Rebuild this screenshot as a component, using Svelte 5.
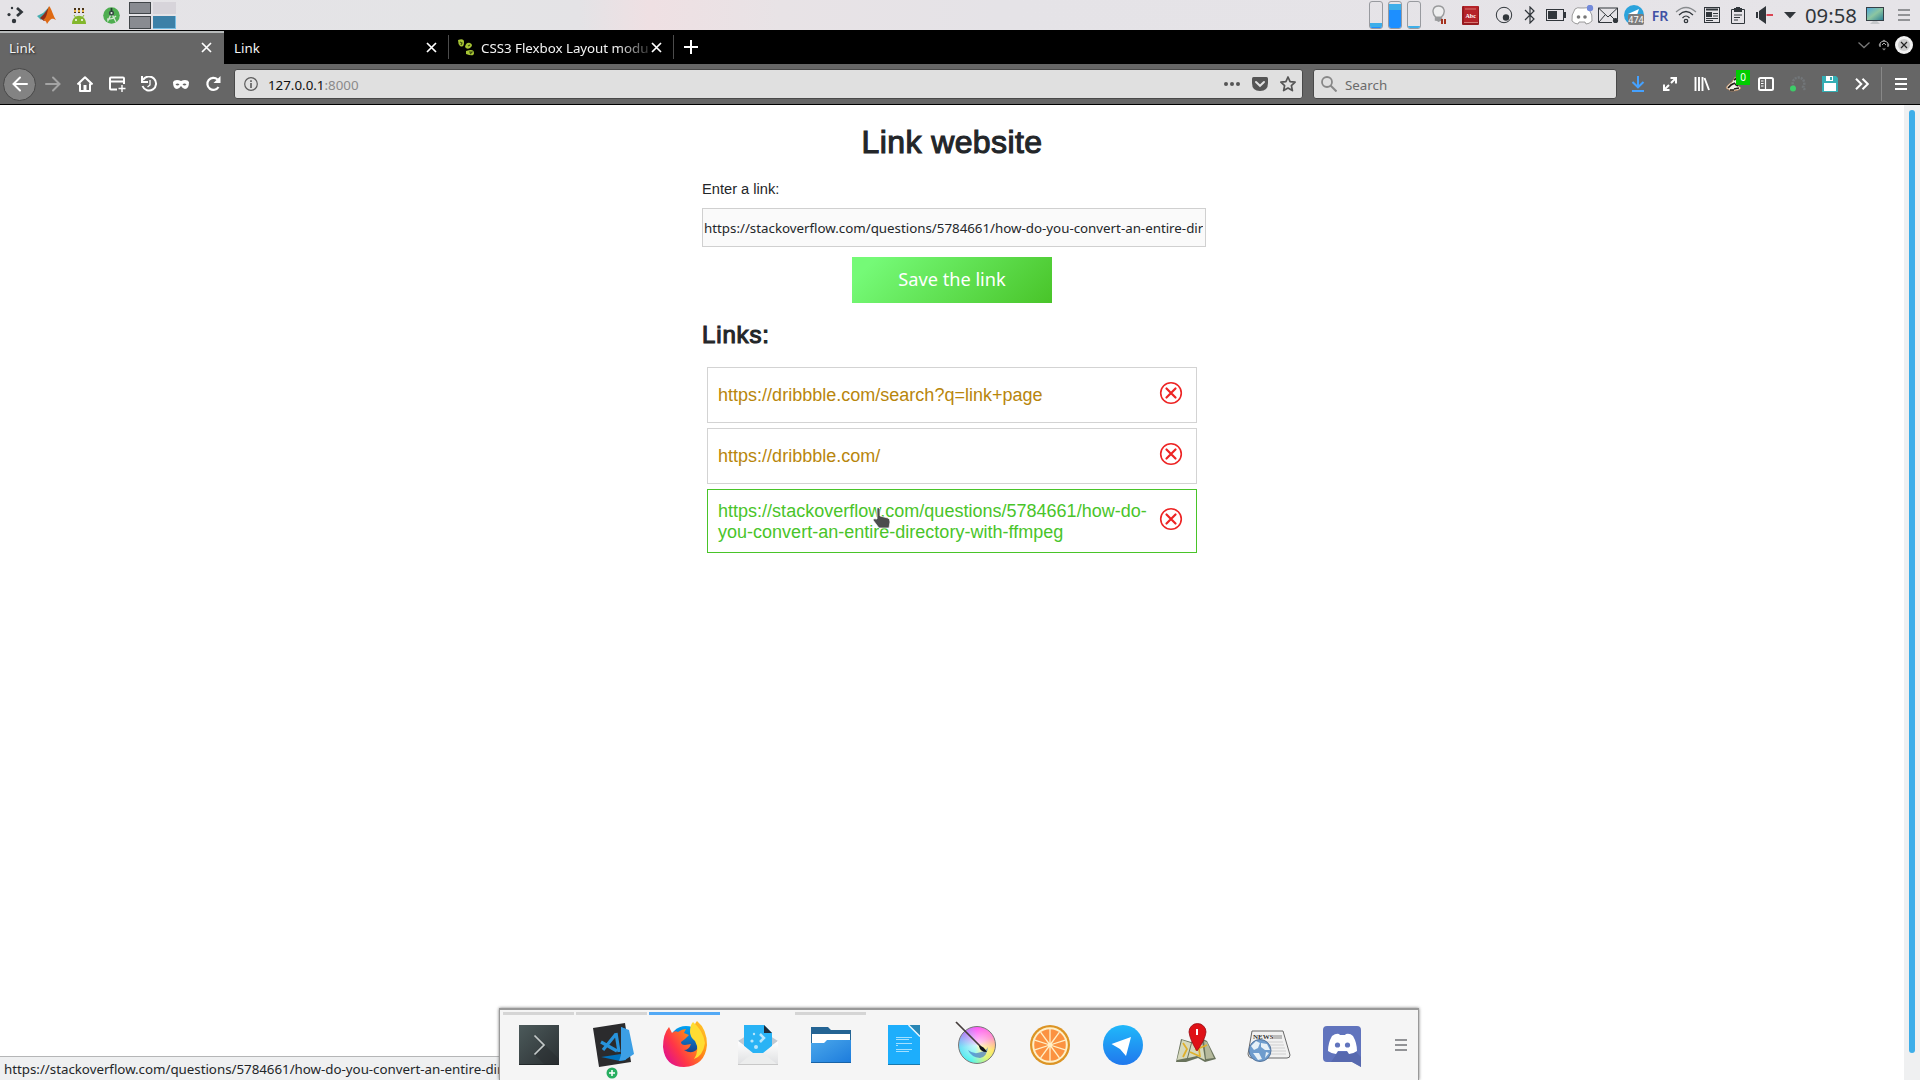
<script>
  const savedLinks = [
    { url: 'https://dribbble.com/search?q=link+page', hovered: false },
    { url: 'https://dribbble.com/', hovered: false },
    {
      url: 'https://stackoverflow.com/questions/5784661/how-do-you-convert-an-entire-directory-with-ffmpeg',
      hovered: true
    }
  ];
  const longUrl = savedLinks[2].url;
  const meters = [
    { top: 4, bottom: 1 },
    { top: 6, bottom: 18 },
    { top: 2, bottom: 0 }
  ];
  const petals = [0, 36, 72, 108, 144, 180, 216, 252, 288, 324];
</script>

{#snippet cross()}
  <svg class="cross" width="11" height="11" viewBox="0 0 11 11"><path d="M1 1l9 9M10 1l-9 9" fill="none" stroke="#fff" stroke-width="1.7" /></svg>
{/snippet}

<div class="desktop">
  <header class="panel">
    <div class="launchers">
      <span class="slot32 first"><svg width="18" height="18" viewBox="0 0 18 18"><g fill="#31363b"><circle cx="5" cy="2" r="1.2" /><circle cx="2" cy="8.6" r="1.6" /><circle cx="7" cy="15" r="2.2" /></g><path d="M10 2l4.500 4-4.500 4" fill="none" stroke="#31363b" stroke-width="2.7" /></svg></span>
      <span class="slot32"><svg width="20" height="18" viewBox="0 0 20 18"><path d="M0 10l6-3 6-6-3 8-5 5z" fill="#45aeb0" /><path d="M3 12l4-4 5-7-2 12-3 2z" fill="#8f2c16" /><path d="M12 0c3 3 4 10 7 14-4-2-5-2-9 4-1-3-2-4-4-4 4-2 4-8 6-14z" fill="#df6912" /></svg></span>
      <span class="slot32"><svg width="16" height="17" viewBox="0 0 16 17"><path d="M4 1v5M8 1v5M12 1v5" stroke="#4b3516" stroke-width="2" /><path d="M4 3v2M8 3v2M12 3v2" stroke="#eab545" stroke-width="2" /><path d="M1 17c0-11 14-11 14 0z" fill="#83b72c" /><path d="M3 8l2 3M13 8l-2 3" stroke="#83b72c" /><circle cx="5" cy="13" r="1" fill="#fff" /><circle cx="11" cy="13" r="1" fill="#fff" /></svg></span>
      <span class="slot32"><svg width="17" height="17" viewBox="0 0 17 17"><circle cx="8.500" cy="8.500" r="8.300" fill="#4eae50" /><path d="M4.500 14.500l4-8 4.500 8.500M4 12q5 1 9-3" fill="none" stroke="#d5e6d3" stroke-width="1.300" /><circle cx="8.500" cy="6" r="2.600" fill="#394c45" /><path d="M8.500 1v4" stroke="#293b36" stroke-width="1.700" /><circle cx="8.500" cy="6" r="1" fill="#e5eee5" /></svg></span>
    </div>
    <div class="pager"><i class="busy"></i><i></i><i class="busy"></i><i class="current"></i></div>
    <div class="tray">
      <div class="meters">
        {#each meters as m}
          <div class="meter"><b style:height="{m.top}px"></b><em style:height="{m.bottom}px"></em></div>
        {/each}
      </div>
      <span class="bulb"><svg width="16" height="20" viewBox="0 0 16 20"><path d="M3.500 12C-1 7 1 1 6.500 1s8 6 3 11v3h-6z" fill="#eeeeef" stroke="#999a9c" stroke-width="1.400" /><path d="M3.500 11.500h6v4L6.500 17l-3-2z" fill="#999a9c" /><path d="M9 14h2v5H9zM12 14h2v5h-2z" fill="#a5321e" /></svg></span>
      <span class="book"><svg width="17" height="19" viewBox="0 0 17 19"><rect width="17" height="19" rx="1" fill="#971b20" /><path d="M2 0h14v17H2z" fill="#b52329" /><path d="M3 3h11M2 16.500h14" stroke="#d67773" /><text x="3.500" y="12" class="abc">Abc</text></svg></span>
      <span class="slot26"><svg width="18" height="18" viewBox="0 0 18 18"><circle cx="9" cy="9" r="7.700" fill="none" stroke="#31363b" /><circle cx="11" cy="11.500" r="3.200" fill="#31363b" /></svg></span>
      <span class="slot26"><svg width="12" height="18" viewBox="0 0 12 18"><path d="M1 4l9 9-4 4V1l4 4-9 9" fill="none" stroke="#31363b" stroke-width="1.200" /></svg></span>
      <span class="slot26"><svg width="20" height="12" viewBox="0 0 20 12"><rect x=".5" y=".5" width="17" height="11" fill="none" stroke="#31363b" /><path d="M2 2h9v8H2zM18 3h2v6h-2z" fill="#31363b" /></svg></span>
      <span class="slot26"><svg width="23" height="20" viewBox="0 0 23 20"><path d="M4 4q3-2 5-1l4 0q3-1 5 1 4 6 3 12-3 3-6 3l-1-2H8l-1 2q-3 0-6-3Q0 10 4 4z" fill="#fff" stroke="#777" stroke-width=".7" /><circle cx="7.500" cy="12" r="1.800" fill="#777" /><circle cx="14" cy="12" r="1.800" fill="#777" /><circle cx="19" cy="3" r="3.200" fill="#7289da" /></svg></span>
      <span class="slot26"><svg width="21" height="17" viewBox="0 0 21 17"><path d="M.5 1h19v11M14 15.500H.5V1l9.500 9 9.500-9M1 15l6-7M12 8l4 4" fill="none" stroke="#31363b" /><circle cx="17.500" cy="13.500" r="2.600" fill="#31363b" /></svg></span>
      <span class="slot26"><svg width="20" height="20" viewBox="0 0 20 20"><circle cx="10" cy="10" r="10" fill="#2ba3dc" /><path d="M4 9l11-5-2 6z" fill="#fff" /><rect x="4" y="9" width="16" height="11" rx="2" fill="#7c7c7c" /><text x="4.300" y="17.500" class="count">474</text></svg></span>
      <span class="slot26 lang">FR</span>
      <span class="slot26"><svg width="22" height="18" viewBox="0 0 22 18"><g fill="none"><path d="M1 6q10-9 20 0" stroke="#888b8e" stroke-width="1.200" /><path d="M4 9q7-7 14 0M7.500 12q3.500-4 7 0" stroke="#31363b" stroke-width="1.200" /><circle cx="11" cy="15" r="1.700" stroke="#31363b" stroke-width="1.300" /></g></svg></span>
      <span class="slot26"><svg width="16" height="16" viewBox="0 0 16 16"><rect x=".5" y=".5" width="15" height="15" fill="none" stroke="#31363b" /><path d="M2 2.500h12" stroke="#31363b" stroke-width="2" /><path d="M9 6.500h5M9 9h5M2 11.500h12M2 13.500h7" stroke="#31363b" stroke-width="1.200" /><path d="M2 5h6v5H2z" fill="#31363b" /></svg></span>
      <span class="slot26"><svg width="14" height="17" viewBox="0 0 14 17"><path d="M.5 2.500h13v14H.5z" fill="none" stroke="#31363b" /><path d="M3 1h2V0h4v1h2v4H3z" fill="#31363b" /><path d="M3 8h8M3 10.500h6M3 13h4" stroke="#31363b" /></svg></span>
      <span class="slot26"><svg width="17" height="18" viewBox="0 0 17 18"><path d="M0 6h2v6H0zM3 5l7-5v18l-7-5z" fill="#31363b" /><path d="M10.500 9H17" stroke="#da4453" stroke-width="2" /></svg></span>
      <span class="slot26"><svg width="12" height="7" viewBox="0 0 12 7"><path d="M0 0h12L6 6.500z" fill="#31363b" /></svg></span>
      <span class="clock">09:58</span>
      <span class="monitor"><svg width="18" height="18" viewBox="0 0 18 18"><defs><linearGradient id="screen" x2="1" y2="1"><stop stop-color="#4fa8d8" /><stop offset=".5" stop-color="#8cc6a1" /><stop offset="1" stop-color="#2f8296" /></linearGradient></defs><rect y="1" width="18" height="14" fill="#353f46" /><rect x="1" y="2" width="16" height="12" fill="url(#screen)" /><path d="M7 15h4l3 3H4z" fill="#c5c7ca" /></svg></span>
      <span class="bars grey"><i></i><i></i><i></i></span>
    </div>
  </header>

  <nav class="tabs">
    <div class="tab active"><span>Link</span>{@render cross()}</div>
    <div class="tab"><span>Link</span>{@render cross()}</div>
    <div class="tab">
      <svg class="favicon" width="17" height="17" viewBox="0 0 17 17"><g fill="#a6c434"><path d="M0 1q6-2 6 2 0 6-4 4Q0 5 0 1z" /><path d="M7 8q1-5 5-4 4 2 0 5-3 2-5-1z" /><path d="M8 12q8-3 8 2 0 4-8 1z" /></g><path d="M2 3l2 1-1 2M10 7l2-1M11 13l3 0-2 2" fill="none" stroke="#3c4d10" stroke-width="1.200" /></svg>
      <span class="faded">CSS3 Flexbox Layout modu</span>{@render cross()}
    </div>
    <svg class="newtab" width="14" height="14" viewBox="0 0 14 14"><path d="M7 0v14M0 7h14" stroke="#fff" stroke-width="2" /></svg>
    <div class="winbtns">
      <svg width="20" height="20" viewBox="0 0 20 20"><path d="M4.500 7.500l5.500 5 5.500-5" fill="none" stroke="#777" stroke-width="1.300" /></svg>
      <svg width="20" height="20" viewBox="0 0 20 20"><path d="M10 4.500l-2 2h4zM10 15.500l-2-2h4zM4.500 10l2-2v4zM15.500 10l-2-2v4z" fill="#888" /><path d="M6 8q4-4 8 0v4M6 8v4M8 10l2-2 2 2" fill="none" stroke="#aaa" /></svg>
      <svg width="20" height="20" viewBox="0 0 20 20"><circle cx="10" cy="10" r="9" fill="#f1f1f1" /><circle cx="10" cy="10" r="6" fill="#ccc" /><path d="M7 7l6 6M13 7l-6 6" stroke="#222" stroke-width="1.200" /></svg>
    </div>
  </nav>

  <div class="toolbar">
    <span class="back"><svg width="16" height="16" viewBox="0 0 16 16"><path d="M15 8H2M8 1.500L1.500 8 8 14.500" fill="none" stroke="#fff" stroke-width="2" stroke-linecap="round" /></svg></span>
    <span class="slot32"><svg width="16" height="16" viewBox="0 0 16 16"><path d="M1 8h13M8 1.500L14.500 8 8 14.500" fill="none" stroke="#a4a4a4" stroke-width="2" stroke-linecap="round" /></svg></span>
    <span class="slot32"><svg width="16" height="16" viewBox="0 0 16 16"><path d="M.5 8.500L8 1.200l7.500 7.300M3 7.500V15h10V7.500" fill="none" stroke="#fff" stroke-width="2" stroke-linejoin="round" /><path d="M6.500 9h3v6h-3z" fill="#fff" /></svg></span>
    <span class="slot32"><svg width="17" height="16" viewBox="0 0 17 16"><path d="M8 13.500H2q-1 0-1-1v-10q0-1 1-1h12q1 0 1 1V8M1 5.500h14" fill="none" stroke="#fff" stroke-width="2" /><path d="M13 9v7M9.500 12.500h7" stroke="#fff" stroke-width="1.400" /></svg></span>
    <span class="slot32"><svg width="17" height="16" viewBox="0 0 17 16"><path d="M2 4a7 7 0 1 1-.5 6" fill="none" stroke="#fff" stroke-width="2" /><path d="M1 0v6h6" fill="none" stroke="#fff" stroke-width="2" /><path d="M9 4v5l-2.500 2" fill="none" stroke="#fff" stroke-width="1.300" /></svg></span>
    <span class="slot32"><svg width="16" height="9" viewBox="0 0 16 9"><path fill-rule="evenodd" d="M0 2q1-2 4-2 2 0 4 1 2-1 4-1 3 0 4 2 0 7-4 7-2 0-4-3-2 3-4 3-4 0-4-7zM2.500 4.500q2 2 4 0-2-2-4 0zM9.500 4.500q2 2 4 0-2-2-4 0z" fill="#fff" /></svg></span>
    <span class="slot32"><svg width="16" height="16" viewBox="0 0 16 16"><path d="M12.500 3.500A6 6 0 1 0 13.500 11" fill="none" stroke="#fff" stroke-width="2.200" /><path d="M15.500 0v7h-7z" fill="#fff" /></svg></span>
    <div class="field urlbar">
      <svg class="info" width="14" height="14" viewBox="0 0 14 14"><circle cx="7" cy="7" r="6.300" fill="none" stroke="#5b5b5b" stroke-width="1.200" /><path d="M7 6v5M7 3.200v1.800" stroke="#5b5b5b" stroke-width="1.600" /></svg>
      <p>127.0.0.1<span>:8000</span></p>
      <svg width="16" height="16" viewBox="0 0 16 16"><g fill="#555"><circle cx="2" cy="8" r="2" /><circle cx="8" cy="8" r="2" /><circle cx="14" cy="8" r="2" /></g></svg>
      <svg width="16" height="16" viewBox="0 0 16 16"><path d="M1.500 1h13q1.500 0 1.500 1.500V7q0 8-8 8T0 7V2.500Q0 1 1.500 1z" fill="#555" /><path d="M4 6l4 3.800L12 6" fill="none" stroke="#e0e0e0" stroke-width="2" stroke-linecap="round" /></svg>
      <svg width="16" height="16" viewBox="0 0 16 16"><path d="M8 1l2.100 4.600 5 .600-3.700 3.400 1 5L8 12.100l-4.400 2.500 1-5L.9 6.200l5-.600z" fill="none" stroke="#555" stroke-width="1.700" stroke-linejoin="round" /></svg>
    </div>
    <div class="field search">
      <svg width="16" height="16" viewBox="0 0 16 16"><circle cx="6" cy="6" r="5" fill="none" stroke="#888" stroke-width="1.800" /><path d="M9.500 9.500l6 6" stroke="#888" stroke-width="2" /></svg>
      <span>Search</span>
    </div>
    <div class="addons">
      <span class="slot32"><svg width="14" height="16" viewBox="0 0 14 16"><path d="M7 0v11M1.500 6L7 11.300 12.500 6M1 15h12" fill="none" stroke="#45a1ff" stroke-width="2" /></svg></span>
      <span class="slot32"><svg width="14" height="14" viewBox="0 0 14 14"><path d="M7.500 1H13v5.500M13 1L8 6M1 7.500V13h5.500M1 13l5-5" fill="none" stroke="#fff" stroke-width="2" /></svg></span>
      <span class="slot32"><svg width="16" height="14" viewBox="0 0 16 14"><path d="M1.500 0v14M5 0v14M8.500 0v14M10.500 1l4.500 12" stroke="#fff" stroke-width="1.900" /></svg></span>
      <span class="slot32 badger"><svg width="18" height="18" viewBox="0 0 18 18"><path d="M1 13q1-3 6-6l3-5 4 2-3 5 5 4q-2 3-10 3z" fill="#f2eee8" stroke="#bd8350" stroke-width=".7" /><path d="M3 13q3-4 7-5M9 5l3-2M9 14l5-1M5 15l4 0M10 9l3 2" fill="none" stroke="#211b17" stroke-width="1.700" /></svg><b>0</b></span>
      <span class="slot32"><svg width="16" height="14" viewBox="0 0 16 14"><rect x="1" y="1" width="14" height="12" rx="1.500" fill="none" stroke="#fff" stroke-width="2" /><path d="M7.500 1v12M3 4h2.500M3 6.500h2.500M3 9h2.500" stroke="#fff" stroke-width="1.200" /></svg></span>
      <span class="slot32"><svg width="16" height="16" viewBox="0 0 16 16"><path d="M4 11a5.800 5.800 0 1 1 9 0l2 3" fill="none" stroke="#727679" stroke-width="2.500" stroke-dasharray="2 1" /><circle cx="3" cy="12.500" r="3" fill="#3dcc68" /></svg></span>
      <span class="slot32"><svg width="16" height="16" viewBox="0 0 16 16"><path d="M0 0h14l2 2v14H0z" fill="#35aeb4" /><path d="M4 0h7v5H4zM2 7h12v8H2z" fill="#fff" /><path d="M8 1h2v3H8z" fill="#35aeb4" /></svg></span>
      <span class="slot32"><svg width="14" height="12" viewBox="0 0 14 12"><path d="M1 .7L6.300 6 1 11.300M7.500.7L12.800 6l-5.300 5.300" fill="none" stroke="#fff" stroke-width="2" /></svg></span>
    </div>
    <i class="divider"></i>
    <span class="bars white"><i></i><i></i><i></i></span>
  </div>

  <div class="viewport">
    <main>
      <h1>Link website</h1>
      <label for="link">Enter a link:</label>
      <input id="link" type="text" value={longUrl} />
      <button class="save">Save the link</button>
      <h2>Links:</h2>
      <ul>
        {#each savedLinks as link}
          <li class:hovered={link.hovered}>
            <a href={link.url}>{link.url}</a>
            <svg width="24" height="24" viewBox="0 0 24 24"><circle cx="12" cy="12" r="10.300" fill="none" stroke="#ed2424" stroke-width="1.600" /><path d="M7.500 7.500l9 9M16.500 7.500l-9 9" stroke="#ed2424" stroke-width="2.200" stroke-linecap="round" /></svg>
          </li>
        {/each}
      </ul>
    </main>
    <div class="scrollbar"><i></i></div>
  </div>

  <div class="status">{longUrl}</div>

  <footer class="dock">
    <div class="app open"><svg width="48" height="48" viewBox="0 0 48 48"><defs><linearGradient id="term" x2="1" y2="1"><stop stop-color="#4c5a5b" /><stop offset="1" stop-color="#2b3033" /></linearGradient></defs><rect x="4" y="4" width="40" height="40" fill="url(#term)" /><path d="M20 34l10-10 14 14v6H30z" fill="#24292b" opacity=".35" /><path d="M19.500 14.500L29 24l-9.500 9.500" fill="none" stroke="#c4c9c9" stroke-width="1.700" /><path d="M4 43.500h40" stroke="#22282a" /></svg></div>
    <div class="app open"><svg width="48" height="48" viewBox="0 0 48 48"><path d="M5 7l32-5 6 39-32 5z" fill="#2b2b2d" /><path d="M33 6l5 2v31l-6 1-19-4 20-3z" fill="#0072bd" /><path d="M33 6l8 3 5 24-9 6-6 1 2-6z" fill="#3c9fe5" /><path d="M28 12l3 19M28 13L15 29M29 30L13 21" fill="none" stroke="#2793dc" stroke-width="3.200" /></svg><svg class="plus" width="12" height="12" viewBox="0 0 12 12"><circle cx="6" cy="6" r="5.500" fill="#27ae60" /><path d="M6 3v6M3 6h6" stroke="#fff" stroke-width="1.500" /></svg></div>
    <div class="app focus"><svg width="48" height="48" viewBox="0 0 48 48"><defs><linearGradient id="fox" x1="1" x2="0" y2=".7"><stop stop-color="#ffd72e" /><stop offset=".4" stop-color="#ff8a16" /><stop offset=".75" stop-color="#ff3647" /><stop offset="1" stop-color="#e31587" /></linearGradient><linearGradient id="globe" y2="1" x2="0"><stop stop-color="#00a3f5" /><stop offset="1" stop-color="#20256e" /></linearGradient></defs><circle cx="25" cy="22" r="17" fill="url(#globe)" /><path d="M8 6l3 6q3-3 6-1 4-3 8-3l-2 4 5 2-4 4-4 3q0 3 4 3l6-1q-2 6-7 6 10 6 15-4 2-8-5-16 0-6 3-9 10 8 10 24-2 21-23 22Q4 46 2 26 2 13 8 6z" fill="url(#fox)" /><path d="M29 11q0-7 3-10 10 8 12 21-2 13-11 16 6-9 1-18-5-4-5-9z" fill="#ffdc32" /></svg></div>
    <div class="app"><svg width="48" height="48" viewBox="0 0 48 48"><defs><linearGradient id="mail" x2="0" y2="1"><stop stop-color="#fff" /><stop offset="1" stop-color="#dedfe1" /></linearGradient></defs><path d="M4 20l8-5h24l8 5-20 14z" fill="#bfc8d1" /><path d="M10 4h20l8 8v16l-9 6H19l-9-6z" fill="#29b3f5" /><path d="M30 4l8 8h-8z" fill="#202b36" /><path d="M4 20l15 12h10l15-12v24H4z" fill="url(#mail)" /><path d="M4 44l15-12h10l15 12" fill="#eceded" /><path d="M4 43.500h40" stroke="#c8c8c8" /><path d="M26 13l4 4-4 4" fill="none" stroke="#b8e6fb" stroke-width="2.500" /><g fill="#b8e6fb"><circle cx="20" cy="13" r="1.200" /><circle cx="18" cy="20" r="1.600" /><circle cx="22" cy="26" r="2" /></g></svg></div>
    <div class="app open"><svg width="48" height="48" viewBox="0 0 48 48"><defs><linearGradient id="folder" y2="1" x2="1"><stop stop-color="#4ba8eb" /><stop offset="1" stop-color="#1c7bdc" /></linearGradient></defs><path d="M4 6h17l3 3h20v32H4z" fill="#246494" /><path d="M5 13h38v15H5z" fill="#fff" /><path d="M4 22h13l3-3h24v23H4z" fill="url(#folder)" /><path d="M4 41.500h40" stroke="#1763a7" /></svg></div>
    <div class="app"><svg width="48" height="48" viewBox="0 0 48 48"><path d="M8 4h21l11 11v29H8z" fill="#1daefc" /><path d="M29 4h11v11z" fill="#2986b4" /><path d="M28.500 4L40 15.500" stroke="#e4f5fd" stroke-width="1.500" /><path d="M16 16.500h16M16 18.500h13M16 22.500h16M16 24.500h2M16 28.500h16M16 30.500h13" stroke="#a3e0ff" /><path d="M8 43.500h32" stroke="#1679ae" /></svg></div>
    <div class="app"><svg width="48" height="48" viewBox="0 0 48 48"><foreignObject x="5" y="5" width="38" height="38"><div class="colorwheel"></div></foreignObject><path d="M15 29q6 5 13 2 5-1 7-5-1 10-8 11-9-1-12-8z" fill="#487bc8" opacity=".7" /><path d="M3 1l25 25" stroke="#443c3b" stroke-width="1.700" /><path d="M26 25q4-1 8 6-7 0-8-6z" fill="#101116" /></svg></div>
    <div class="app"><svg width="48" height="48" viewBox="0 0 48 48"><circle cx="24" cy="24" r="20" fill="#dc9424" /><circle cx="24" cy="24" r="17.800" fill="#fff0c8" /><circle cx="24" cy="24" r="15.800" fill="#fb9241" />{#each petals as angle}<path d="M24 24V8" stroke="#fff0c8" stroke-width="1.300" transform="rotate({angle} 24 24)" />{/each}<circle cx="24" cy="24" r="2.300" fill="#fff0c8" /></svg></div>
    <div class="app"><svg width="48" height="48" viewBox="0 0 48 48"><defs><linearGradient id="tg" y2="1" x2="0"><stop stop-color="#20b8fa" /><stop offset="1" stop-color="#2078ed" /></linearGradient></defs><circle cx="24" cy="24" r="20" fill="url(#tg)" /><path d="M12.500 23L32 16l-5 19-6-7z" fill="#fff" /></svg></div>
    <div class="app"><svg width="48" height="48" viewBox="0 0 48 48"><path d="M9 18l10 3 12-3 4 2 9 18-11 3-7-4-12 4-10 0z" fill="#69735c" /><path d="M10 19l9 3-4 15-10 2zM20 22l10-2 3 19-8-4-9 2z" fill="#d6d9bd" /><path d="M32 20l3 1 7 16-8 1z" fill="#b5b99c" /><path d="M11 22l4 6-4 8M18 31l9 4M35 24l-12 5M27 28l1 8" fill="none" stroke="#dfb02b" stroke-width="1.800" /><path d="M25 30q-7-11-8-19a8.500 8.500 0 0 1 17 0q-1 8-9 19z" fill="#df1117" stroke="#970a12" stroke-width=".8" /><path d="M25 8v6" stroke="#fff" stroke-width="2" /></svg></div>
    <div class="app"><svg width="48" height="48" viewBox="0 0 48 48"><path d="M7 10h31l7 24q0 3-3 3H6q-3-1-3-4z" fill="#f1f1f1" stroke="#686868" /><text x="8" y="18" class="news">NEWS</text><path d="M28 14h9v4h-9z" fill="#bbb" /><path d="M9 21h29M20 24h19M25 27h15M26 30h15M26 33h15" stroke="#c8c8c8" stroke-width=".8" /><circle cx="15" cy="29.500" r="11" fill="#6e9ccd" stroke="#55759c" /><path d="M6 25l5-5 4 2-2 5-4 2zM16 22l6 1 3 6-5 0-4-3zM8 32l6 0 3 6-4 1zM21 31l3 1-4 5z" fill="#e6f0f7" /></svg></div>
    <div class="app"><svg width="48" height="48" viewBox="0 0 48 48"><path d="M9 5h30q4 0 4 4v37l-9-5H9q-4 0-4-4V9q0-4 4-4z" fill="#6174bd" /><path d="M20 31h18l5 5v10l-9-5H13z" fill="#5062a5" opacity=".6" /><path d="M14 15q4-3 7-2l1 1h5l1-1q4-1 7 2 4 7 4 15-4 3-8 3l-2-3h-9l-2 3q-4 0-8-3 0-8 4-15z" fill="#fff" /><circle cx="19.500" cy="24" r="2.600" fill="#6174bd" /><circle cx="29.500" cy="24" r="2.600" fill="#6174bd" /></svg></div>
    <span class="bars grey"><i></i><i></i><i></i></span>
  </footer>

  <svg class="pointer" width="20" height="24" viewBox="0 0 20 24"><path d="M5 1q2-1 3 1v7l8 2q2 1 2 4l-1 6H7l-6-8q0-2 4-1z" fill="#4d4d4d" stroke="#fff" stroke-opacity=".7" stroke-width="1" /></svg>
</div>

<style>
  :global(body) { background: #fff; overflow: hidden; }
  .desktop {
    position: relative; width: 1920px; height: 1080px; overflow: hidden;
    display: flex; flex-direction: column;
    font-family: 'Noto Sans', sans-serif; font-size: 13.33px; color: #232629;
  }
  svg { display: block; flex: none; }

  .panel {
    height: 30px; display: flex; align-items: center; flex: none;
    background: linear-gradient(90deg, #e5e3e7 0, #e4e4e6 480px, #e4e3e6 580px, #efe0e3 650px, #e8e3e6 780px, #e5e3e7 1000px, #e6e4e8 100%);
  }
  .launchers { display: flex; }
  .slot32 { width: 32px; height: 30px; display: flex; align-items: center; justify-content: center; flex: none; }
  .slot32.first { width: 31px; }
  .slot26 { width: 26px; height: 30px; display: flex; align-items: center; justify-content: center; flex: none; }
  .pager { display: grid; grid-template-columns: 22px 23px; grid-template-rows: 12px 13px; gap: 2px; margin: 0 0 0 2px; }
  .pager i { background: #d7d4da; }
  .pager .busy { background: #898b91; border: 1px solid #414549; }
  .pager .current { background: #3c80a7; border: 1px solid #76bde3; border-width: 0 1px 1px 0; }
  .tray { margin-left: auto; display: flex; align-items: center; height: 30px; }
  .meters { display: flex; gap: 5px; margin-right: 11px; }
  .meter {
    box-sizing: border-box; width: 14px; height: 28px; border: 1px solid #989a9f; border-radius: 3px;
    display: flex; flex-direction: column; justify-content: flex-end; overflow: hidden;
  }
  .meter b { background: #3daee9; }
  .meter em { background: #1d8fff; }
  .bulb { margin-right: 14px; }
  .book { margin-right: 12px; }
  .abc { font: bold 6px 'Liberation Serif', serif; fill: #fff; }
  .count { font: 9px 'Noto Sans', sans-serif; fill: #fff; }
  .lang { color: #3f51a4; font-weight: 600; font-size: 14px; }
  .clock { width: 52px; margin-left: 2px; font-size: 20.3px; line-height: 30px; color: #31363b; white-space: nowrap; }
  .monitor { margin-left: 9px; }
  .bars { display: flex; flex-direction: column; }
  .bars i { width: 12px; height: 2px; }
  .grey { gap: 3px; }
  .grey i { background: #929396; }
  .white { gap: 3px; margin-left: 13px; }
  .white i { background: #fff; }
  .tray .bars { margin: 0 10px 0 14px; }

  .tabs { height: 34px; background: #000; display: flex; align-items: center; flex: none; color: #f3f3f3; }
  .tab {
    box-sizing: border-box; width: 225px; height: 24px; display: flex; align-items: center;
    border-right: 1px solid #4c4c4c; padding: 0 11px 0 10px;
  }
  .tab.active { width: 224px; height: 34px; background: #666; border: 0; padding: 0 12px 0 9px; box-shadow: inset 0 1px #000, inset 0 3px #b8bbbb; }
  .active span { text-shadow: 1px 1px 2px #222; }
  .tab span { flex: 1; line-height: 24px; white-space: nowrap; padding-top: 1px; }
  .tab .faded { mask-image: linear-gradient(90deg, #000 80%, rgba(0, 0, 0, 0.15) 100%); letter-spacing: -0.03px; }
  .favicon { margin: 0 6px 0 -1px; }
  .newtab { margin-left: 10px; }
  .winbtns { display: flex; margin: -4px 6px 0 auto; }

  .toolbar {
    box-sizing: border-box; height: 41px; display: flex; align-items: center; flex: none;
    background: #666; border-bottom: 1px solid #000; padding-left: 3px;
  }
  .back {
    box-sizing: border-box; width: 33px; height: 33px; border-radius: 50%; background: #838383; margin-right: 1px;
    border: 1px solid #484848; display: flex; align-items: center; justify-content: center;
  }
  .field {
    box-sizing: border-box; height: 30px; border: 1px solid #494949; border-radius: 3px;
    background: #e0e0e0; display: flex; align-items: center;
  }
  .urlbar { width: 1069px; margin-left: 5px; padding: 0 6px 0 9px; gap: 12px; }
  .urlbar p { flex: 1; margin: 2px 0 0 -2px; color: #111; }
  .urlbar p span { color: #8a8a8a; }
  .search { width: 304px; margin-left: 10px; padding-left: 7px; gap: 8px; color: #6b6b6b; }
  .search span { padding-top: 2px; }
  .addons { display: flex; margin-left: 5px; }
  .badger { position: relative; }
  .badger b {
    position: absolute; left: 18px; top: 1px; width: 14px; height: 15px; background: #00cc00; color: #fff;
    font-weight: 400; font-size: 10px; line-height: 15px; text-align: center;
  }
  .divider { width: 1px; height: 34px; background: #888; margin-left: 3px; }

  .viewport { flex: 1; display: flex; background: #fff; }
  main {
    width: 500px; margin-left: 702px; font-family: 'Liberation Sans', Arial, sans-serif;
    display: flex; flex-direction: column; align-items: flex-start;
  }
  h1, h2 { font-weight: 400; -webkit-text-stroke: 1.1px #232629; }
  h1 { align-self: center; font-size: 32px; line-height: 37px; margin: 19px 0 0; letter-spacing: 0.4px; }
  label { font-size: 14.67px; line-height: 18px; margin-top: 19px; }
  input {
    box-sizing: border-box; width: 504px; height: 39px; margin: 10px 0; flex: none;
    border: 1px solid #d0d0d0; background: #fafafa; padding: 1px 2px 1px 1px;
    font: 13.33px 'Noto Sans', sans-serif; letter-spacing: -0.01px; color: #232629;
  }
  .save {
    width: 200px; height: 46px; border: 0; padding: 0 0 2px; align-self: center;
    background: linear-gradient(135deg, #75fa77 10%, #49c429 100%);
    font: 18.2px 'Noto Sans', sans-serif; color: #fff;
  }
  h2 { font-size: 24px; line-height: 28px; margin: 18px 0 0; letter-spacing: 0.85px; }
  ul { list-style: none; width: 490px; margin: 18px 0 0 5px; padding: 0; display: flex; flex-direction: column; gap: 5px; }
  li {
    box-sizing: border-box; min-height: 56px; border: 1px solid #d3d3d3; padding: 0 13px 0 10px;
    display: flex; align-items: center; justify-content: space-between;
  }
  li a { width: 430px; color: #b8860b; text-decoration: none; font-size: 18px; line-height: 21px; letter-spacing: 0.01px; }
  li svg { margin-top: -4px; }
  li.hovered { min-height: 64px; border-color: #49c429; }
  li.hovered a { color: #49c429; padding-top: 2px; }

  .scrollbar { width: 16px; margin-left: auto; background: #eff0f1; display: flex; justify-content: center; }
  .scrollbar i { width: 6px; height: 943px; margin-top: 5px; border-radius: 3px; background: #3daee9; }

  .status {
    position: absolute; left: 0; top: 1056px; box-sizing: border-box; height: 24px;
    border-top: 1px solid #b5b6b7; background: #eff0f1; padding: 0 4px; line-height: 25px; white-space: nowrap;
    letter-spacing: -0.02px;
  }
  .dock {
    position: absolute; left: 499px; top: 1008px; box-sizing: border-box; width: 920px; height: 72px;
    border: 1px solid #999; border-width: 2px 1px 0; background: #f5f5f5; box-shadow: 0 0 3px #777;
    display: flex; padding-left: 2px;
  }
  .app {
    position: relative; box-sizing: border-box; width: 71px; margin: 2px 1px 0; height: 68px;
    border-top: 3px solid transparent; display: flex; justify-content: center; padding-top: 6px;
  }
  .open { border-color: #d5d5d5; }
  .focus { border-color: #53a9f5; }
  .plus { position: absolute; left: 30px; bottom: 1px; }
  .news { font: bold 7px 'Liberation Serif', serif; fill: #333; }
  .colorwheel {
    box-sizing: border-box; width: 38px; height: 38px; border: 1px solid #777; border-radius: 50%;
    background: radial-gradient(circle, rgba(255,255,255,.75), transparent 75%),
      conic-gradient(#ff50f5, #ff85cd 60deg, #ffe65a 110deg, #d6f56a 145deg, #45f3ea 200deg, #61dff5 260deg, #9c8bf5 305deg, #ff50f5);
  }
  .dock .bars { margin: 29px 0 0 17px; }
  .pointer { position: absolute; left: 872px; top: 507px; }
</style>
